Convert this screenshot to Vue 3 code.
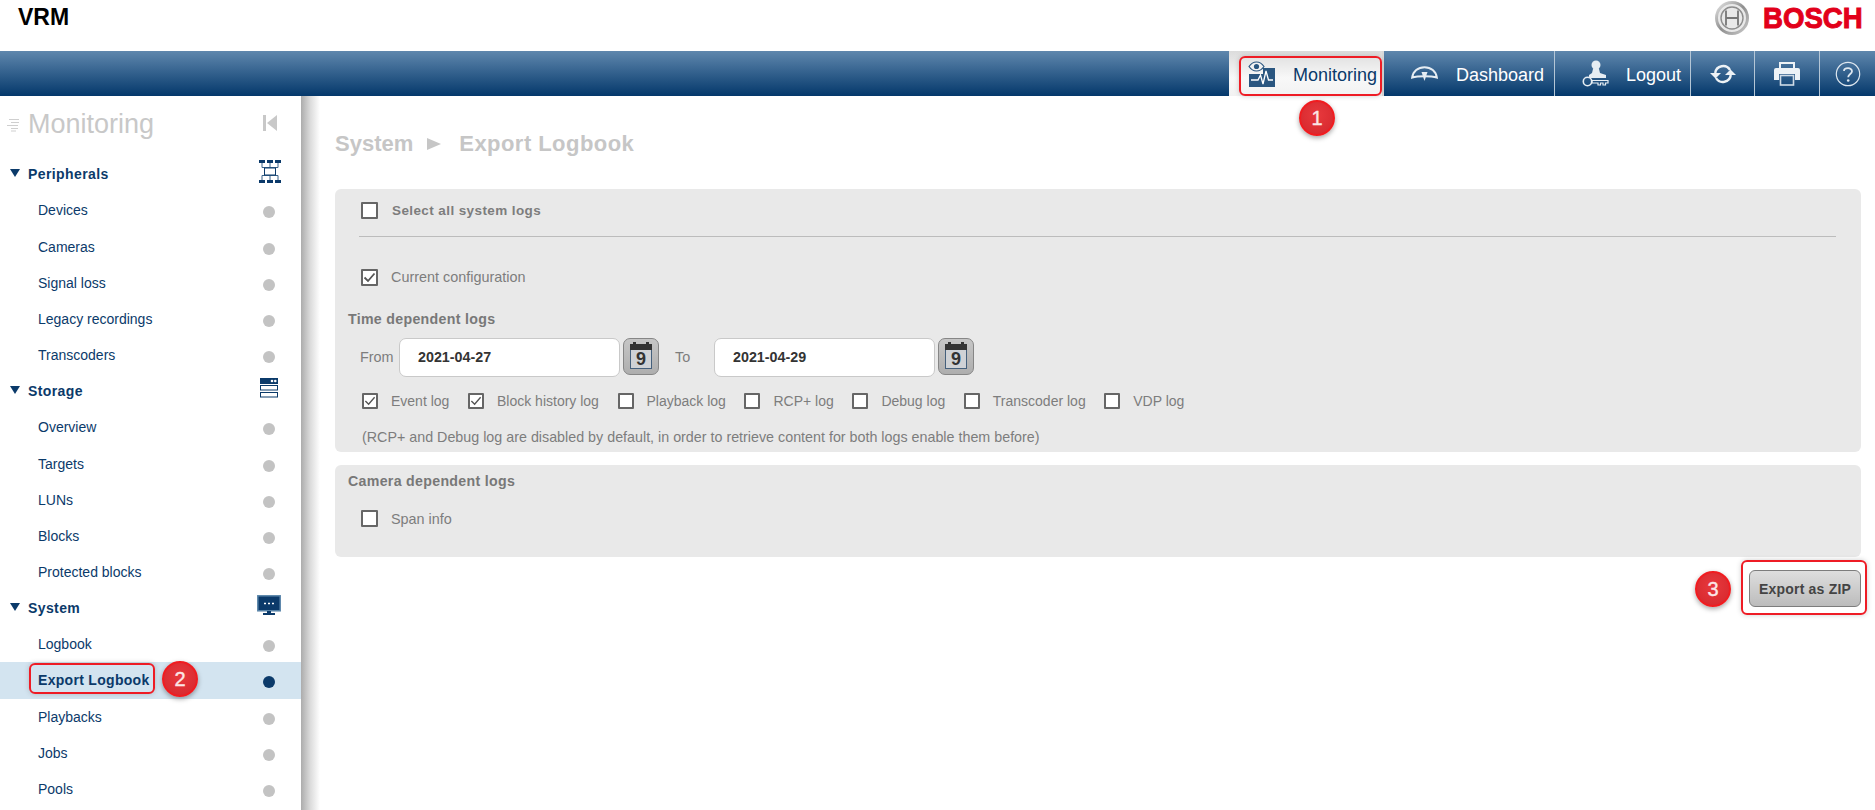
<template>
  <div class="page">
    <header class="top">
      <div class="app-name">VRM</div>
      <div class="brand">
        <svg class="emblem" width="34" height="34" viewBox="0 0 34 34">
          <defs>
            <linearGradient id="ring" x1="0" y1="0" x2="1" y2="1">
              <stop offset="0" stop-color="#e4e4e4" />
              <stop offset="0.5" stop-color="#8f8f8f" />
              <stop offset="1" stop-color="#c9c9c9" />
            </linearGradient>
          </defs>
          <circle cx="17" cy="17" r="15.5" fill="#e9e9e9" stroke="url(#ring)" stroke-width="3" />
          <circle cx="17" cy="17" r="11" fill="none" stroke="#8d8d8d" stroke-width="1.4" />
          <path d="M11 9.5V24.5M23 9.5V24.5M11 17H23" fill="none" stroke="#777" stroke-width="1.8" />
        </svg>
        <span class="bosch">BOSCH</span>
      </div>
    </header>

    <nav class="nav">
      <div class="nav-tab active">
        <svg width="28" height="28" viewBox="0 0 28 28">
          <rect x="1" y="14" width="26" height="13" fill="#2a5680" />
          <rect x="15" y="8" width="12" height="7" fill="#2a5680" />
          <path d="M1 6.5C5 0.5 12 0.5 16 6.5C12 12.5 5 12.5 1 6.5Z" fill="#f2f2f2" stroke="#2a5680" stroke-width="1.2" />
          <circle cx="8.5" cy="6.5" r="2.6" fill="#2a5680" />
          <path d="M3 20H10L12.5 15L15 24L18 11L20.5 20H25" fill="none" stroke="#fff" stroke-width="1.3" />
        </svg>
        <span class="nav-text">Monitoring</span>
        <i class="mark mark-tab"></i>
        <b class="badge badge-tab">1</b>
      </div>
      <div class="nav-tab dash">
        <svg width="27" height="15" viewBox="0 0 27 15">
          <path d="M1.2 11.500C2 5.500 7 1.200 13.500 1.200C20 1.200 25 5.500 25.800 11.500C20 9.800 7 9.800 1.200 11.500Z" fill="none" stroke="#e6edf3" stroke-width="2" />
          <path d="M10.500 6L13.500 15L16.500 6Z" fill="#e6edf3" />
        </svg>
        <span class="nav-text">Dashboard</span>
      </div>
      <div class="nav-tab logout">
        <svg width="27" height="28" viewBox="0 0 27 28">
          <circle cx="14" cy="5" r="4.5" fill="#e6edf3" />
          <path d="M11 9H17L18 13L24 15V18H7V15L10 13Z" fill="#e6edf3" />
          <circle cx="5.5" cy="21.5" r="4.2" fill="none" stroke="#e6edf3" stroke-width="1.6" />
          <path d="M10 20.5H26V23H23.5V25H21V23H18.5V25H16V23H10Z" fill="none" stroke="#e6edf3" stroke-width="1.2" />
        </svg>
        <span class="nav-text">Logout</span>
      </div>
      <div class="nav-tab tool refresh">
        <svg width="26" height="22" viewBox="0 0 26 22">
          <path d="M5.2 10A8 8 0 0 1 20 7" fill="none" stroke="#edf2f6" stroke-width="2.4" />
          <path d="M20.800 12A8 8 0 0 1 6 15" fill="none" stroke="#edf2f6" stroke-width="2.4" />
          <path d="M0 10H11L5.5 15.5Z" fill="#edf2f6" />
          <path d="M15 12H26L20.5 6.5Z" fill="#edf2f6" />
        </svg>
      </div>
      <div class="nav-tab tool print">
        <svg width="26" height="24" viewBox="0 0 26 24">
          <path d="M6 7V1H20V7" fill="none" stroke="#edf2f6" stroke-width="2" />
          <path d="M2 6H24Q26 6 26 8V18H21V12H5V18H0V8Q0 6 2 6Z" fill="#edf2f6" />
          <rect x="6.5" y="13.5" width="13" height="9.5" fill="none" stroke="#cfdbe6" stroke-width="1.6" />
        </svg>
      </div>
      <div class="nav-tab tool help">
        <svg width="26" height="26" viewBox="0 0 26 26">
          <circle cx="13" cy="13" r="11.7" fill="none" stroke="#dfe8f0" stroke-width="1.2" />
          <path d="M9 10C9 6.5 17 6 17 10.3C17 13 13.2 13 13.2 16.3" fill="none" stroke="#dfe8f0" stroke-width="1.8" />
          <circle cx="13.2" cy="19.5" r="1.3" fill="#dfe8f0" />
        </svg>
      </div>
    </nav>

    <div class="body">
      <aside class="side">
        <div class="side-title">
          <svg width="14" height="14" viewBox="0 0 14 14">
            <path d="M3 1.500H13M5 4.500H13M1 7.500H12M5 10.500H12M5 13H10" stroke="#cfcfcf" stroke-width="1.2" />
          </svg>
          <span class="side-name">Monitoring</span>
          <svg class="collapse" width="14" height="16" viewBox="0 0 14 16">
            <rect x="0" y="0" width="3" height="16" fill="#c8c8c8" />
            <path d="M14 0V16L4 8Z" fill="#c8c8c8" />
          </svg>
        </div>

        <template v-for="g in groups" :key="g.name">
          <div class="row group">
            <i class="tri"></i>
            <span class="group-name">{{ g.name }}</span>
            <svg v-if="g.icon === 'net'" class="g-icon" width="22" height="23" viewBox="0 0 22 23">
              <path d="M0 0H6V3H0ZM8 0H14V3H8ZM16 0H22V3H16ZM0 20H6V23H0ZM8 20H14V23H8ZM16 20H22V23H16Z" fill="#0b3a6a" />
              <path d="M3 3V7.500H19V3M11 3V7.500M3 20V15.500H19V20M11 15.500V20" fill="none" stroke="#3a6288" stroke-width="1" />
              <rect x="5.500" y="8" width="11" height="7" fill="#fff" stroke="#0b3a6a" stroke-width="1" />
            </svg>
            <svg v-else-if="g.icon === 'store'" class="g-icon store" width="20" height="20" viewBox="0 0 20 20">
              <rect x="1" y="0" width="18" height="6" fill="#0b3a6a" />
              <circle cx="13" cy="3" r="1.300" fill="#fff" />
              <circle cx="16.300" cy="3" r="1.300" fill="#fff" />
              <rect x="1.500" y="7.500" width="17" height="4.500" fill="#fff" stroke="#0b3a6a" />
              <rect x="1.500" y="14.500" width="17" height="4.500" fill="#fff" stroke="#0b3a6a" />
            </svg>
            <svg v-else class="g-icon" width="24" height="21" viewBox="0 0 24 21">
              <rect x="0.800" y="0.800" width="22.400" height="15" fill="#0b3a6a" stroke="#5b86aa" stroke-width="1.500" />
              <path d="M7 8.500H9M11 8.500H13M15 8.500H17" stroke="#fff" stroke-width="1.700" />
              <path d="M10 16H14V18H18V20H6V18H10Z" fill="#0b3a6a" />
            </svg>
          </div>
          <div v-for="item in g.items" :key="item" class="row item" :class="{ current: item === 'Export Logbook' }">
            <span>{{ item }}</span>
            <i class="dot"></i>
            <template v-if="item === 'Export Logbook'">
              <i class="mark mark-row"></i>
              <b class="badge badge-row">2</b>
            </template>
          </div>
        </template>
      </aside>
      <div class="side-shadow"></div>

      <main class="main">
        <h1 class="crumb">
          <span class="crumb-sys">System</span>
          <i class="crumb-arrow"></i>
          <span class="crumb-page">Export Logbook</span>
        </h1>

        <section class="panel first">
          <label class="line select-all">
            <span class="box"></span>
            <span class="strong">Select all system logs</span>
          </label>
          <div class="rule"></div>
          <label class="line current-config">
            <span class="box">
              <svg width="13" height="13" viewBox="0 0 13 13"><path d="M1.500 6.500L5 10L11.500 2.500" fill="none" stroke="#555" stroke-width="1.800" /></svg>
            </span>
            <span>Current configuration</span>
          </label>
          <div class="heading time-head">Time dependent logs</div>
          <div class="dates">
            <span class="from">From</span>
            <div class="date">2021-04-27</div>
            <button class="cal">
              <span class="cal-top"></span>
              <span class="cal-day">9</span>
            </button>
            <span class="to">To</span>
            <div class="date">2021-04-29</div>
            <button class="cal">
              <span class="cal-top"></span>
              <span class="cal-day">9</span>
            </button>
          </div>
          <div class="logs">
            <label v-for="l in logs" :key="l.name" class="log">
              <span class="box small">
                <svg v-if="l.on" width="12" height="12" viewBox="0 0 13 13"><path d="M1.500 6.500L5 10L11.500 2.500" fill="none" stroke="#555" stroke-width="1.500" /></svg>
              </span>
              <span>{{ l.name }}</span>
            </label>
          </div>
          <p class="note">(RCP+ and Debug log are disabled by default, in order to retrieve content for both logs enable them before)</p>
        </section>

        <section class="panel second">
          <div class="heading camera-head">Camera dependent logs</div>
          <label class="line span-info">
            <span class="box"></span>
            <span>Span info</span>
          </label>
        </section>

        <div class="actions">
          <div class="export-wrap">
            <button class="export">Export as ZIP</button>
            <i class="mark mark-export"></i>
            <b class="badge badge-export">3</b>
          </div>
        </div>
      </main>
    </div>
  </div>
</template>

<script setup>
const groups = [
  { name: 'Peripherals', icon: 'net', items: ['Devices', 'Cameras', 'Signal loss', 'Legacy recordings', 'Transcoders'] },
  { name: 'Storage', icon: 'store', items: ['Overview', 'Targets', 'LUNs', 'Blocks', 'Protected blocks'] },
  { name: 'System', icon: 'screen', items: ['Logbook', 'Export Logbook', 'Playbacks', 'Jobs', 'Pools'] }
]

const logs = [
  { name: 'Event log', on: true },
  { name: 'Block history log', on: true },
  { name: 'Playback log', on: false },
  { name: 'RCP+ log', on: false },
  { name: 'Debug log', on: false },
  { name: 'Transcoder log', on: false },
  { name: 'VDP log', on: false }
]
</script>

<style>
html,
body {
  margin: 0;
  overflow: hidden;
  background: #fff;
}
</style>

<style scoped>
.page {
  width: 1875px;
  height: 810px;
  overflow: hidden;
  font-family: 'Liberation Sans', Arial, sans-serif;
  background: #fff;
}

.top {
  height: 51px;
  display: flex;
  justify-content: space-between;
  align-items: flex-start;
}

.app-name {
  margin: 4px 0 0 18px;
  font-size: 23px;
  line-height: 26px;
  font-weight: 700;
  color: #000;
}

.brand {
  display: flex;
  align-items: center;
  margin: 1px 16px 0 0;
}

.bosch {
  width: 96px;
  margin-left: 14px;
  font-size: 30px;
  line-height: 34px;
  font-weight: 700;
  color: #e2001a;
  -webkit-text-stroke: 1px #e2001a;
  transform: scaleX(0.92);
  transform-origin: left center;
}

.nav {
  height: 45px;
  display: flex;
  justify-content: flex-end;
  background: linear-gradient(#5f87ad, #04386b);
}

.nav-tab {
  position: relative;
  display: flex;
  align-items: center;
  box-sizing: border-box;
  height: 45px;
  color: #fff;
  font-size: 18px;
  border-left: 1px solid #b4c6d6;
}

.nav-text {
  margin-top: 3px;
}

.nav-tab.active {
  width: 155px;
  padding-left: 19px;
  gap: 17px;
  color: #0b3a6a;
  border-left: 0;
  border-right: 2px solid #d9d9d9;
  background: linear-gradient(#dcdcdc, #f8f8f8 60%, #f2f2f2);
}

.nav-tab.dash {
  width: 170px;
  padding-left: 27px;
  gap: 18px;
  border-left: 0;
}

.nav-tab.logout {
  width: 136px;
  padding-left: 27px;
  gap: 17px;
}

.nav-tab.tool {
  justify-content: center;
}

.refresh {
  width: 64px;
}

.print {
  width: 65px;
}

.help {
  width: 56px;
}

.body {
  display: flex;
  height: 714px;
}

.side {
  width: 301px;
  flex: none;
  color: #0b3a6a;
}

.side-shadow {
  width: 19px;
  flex: none;
  background: linear-gradient(90deg, #acacac, #dcdcdc 50%, #fff);
}

.side-title {
  position: relative;
  height: 60.2px;
  box-sizing: border-box;
  padding: 0 24px 3px 6px;
  display: flex;
  align-items: center;
}

.side-name {
  margin-left: 8px;
  font-size: 27px;
  color: #c8c8c8;
}

.collapse {
  margin-left: auto;
  margin-bottom: 3px;
}

.row {
  position: relative;
  height: 36.17px;
  display: flex;
  align-items: center;
  box-sizing: border-box;
}

.group {
  padding: 0 20px 0 10px;
}

.tri {
  width: 0;
  height: 0;
  margin-bottom: 3px;
  border-left: 5px solid transparent;
  border-right: 5px solid transparent;
  border-top: 8px solid #0b3a6a;
}

.group-name {
  margin-left: 8px;
  font-size: 14px;
  font-weight: 700;
  letter-spacing: 0.4px;
}

.g-icon {
  margin-left: auto;
  margin-bottom: 6px;
}

.g-icon.store {
  margin-right: 2px;
}

.item {
  padding: 0 26px 0 38px;
  font-size: 14px;
}

.dot {
  width: 12px;
  height: 12px;
  margin: 4px 0 0 auto;
  border-radius: 50%;
  background: #c3c3c3;
}

.current {
  background: #d3e4f0;
  font-weight: 700;
  letter-spacing: 0.3px;
}

.current .dot {
  background: #0b3a6a;
}

.main {
  flex: 1;
  padding: 0 14px 0 15px;
  min-width: 0;
}

.crumb {
  display: flex;
  align-items: center;
  height: 93px;
  box-sizing: border-box;
  padding-top: 3px;
  margin: 0;
  font-size: 22px;
  font-weight: 700;
  color: #c6c6c6;
}

.crumb-arrow {
  width: 0;
  height: 0;
  margin: 0 18px 0 14px;
  border-top: 6px solid transparent;
  border-bottom: 6px solid transparent;
  border-left: 14px solid #c6c6c6;
}

.crumb-page {
  letter-spacing: 0.45px;
}

.panel {
  background: #e9e9e9;
  border-radius: 6px;
  font-size: 14.4px;
  color: #7d7d7d;
}

.panel.first {
  height: 263px;
  overflow: hidden;
}

.panel.second {
  height: 92px;
  margin-top: 13px;
  overflow: hidden;
}

.line {
  display: flex;
  align-items: center;
  height: 26px;
  padding-left: 26px;
  gap: 13px;
}

.select-all {
  height: 43px;
  gap: 14px;
}

.strong {
  font-weight: 700;
  font-size: 13.5px;
  letter-spacing: 0.4px;
}

.box {
  width: 17px;
  height: 17px;
  box-sizing: border-box;
  flex: none;
  display: flex;
  align-items: center;
  justify-content: center;
  background: #fff;
  border: 2px solid #666;
  border-radius: 1px;
}

.box.small {
  width: 16px;
  height: 16px;
}

.rule {
  height: 1px;
  margin: 4px 25px 0 24px;
  background: #bcbcbc;
}

.current-config {
  margin-top: 27px;
}

.heading {
  font-weight: 700;
  font-size: 14.2px;
  line-height: 20px;
  color: #787878;
  letter-spacing: 0.3px;
}

.time-head {
  margin: 19px 0 0 13px;
}

.dates {
  display: flex;
  align-items: flex-start;
  height: 39px;
  margin-top: 9px;
  padding-left: 25px;
}

.from,
.to {
  line-height: 38px;
}

.from {
  width: 39px;
}

.to {
  width: 39px;
  margin-left: 16px;
}

.date {
  width: 221px;
  height: 39px;
  box-sizing: border-box;
  padding-left: 18px;
  font-size: 14.3px;
  font-weight: 700;
  line-height: 37px;
  color: #333;
  background: #fff;
  border: 1px solid #c9c9c9;
  border-radius: 7px;
}

.cal {
  position: relative;
  width: 36px;
  height: 37px;
  margin-left: 3px;
  padding: 0;
  box-sizing: border-box;
  background: linear-gradient(#c6c6c6, #aeaeae);
  border: 1px solid #868686;
  border-radius: 7px;
}

.cal-top {
  position: absolute;
  left: 6px;
  top: 5px;
  width: 22px;
  height: 6px;
  background: #333;
}

.cal-top::before,
.cal-top::after {
  content: '';
  position: absolute;
  top: -2px;
  width: 3px;
  height: 2px;
  background: #333;
}

.cal-top::before {
  left: 3px;
}

.cal-top::after {
  right: 3px;
}

.cal-day {
  position: absolute;
  left: 6px;
  top: 11px;
  width: 22px;
  height: 19px;
  box-sizing: border-box;
  background: #cfd2d6;
  border: 1px solid #45607c;
  border-top: 0;
  font-family: 'Liberation Sans', Arial, sans-serif;
  font-size: 18px;
  font-weight: 700;
  line-height: 18px;
  color: #333;
  text-align: center;
}

.logs {
  display: flex;
  align-items: center;
  height: 20px;
  margin-top: 14px;
  padding-left: 27px;
  gap: 18.6px;
  font-size: 14px;
}

.log {
  display: flex;
  align-items: center;
  gap: 13px;
}

.note {
  height: 20px;
  margin: 16px 0 0 27px;
  line-height: 20px;
  font-size: 14.3px;
}

.camera-head {
  margin: 6px 0 0 13px;
}

.span-info {
  margin-top: 14.5px;
}

.actions {
  display: flex;
  justify-content: flex-end;
  margin-top: 13px;
}

.export-wrap {
  position: relative;
  width: 112px;
  height: 37px;
}

.export {
  width: 112px;
  height: 37px;
  padding: 0;
  box-sizing: border-box;
  font-family: 'Liberation Sans', Arial, sans-serif;
  font-size: 14px;
  font-weight: 700;
  letter-spacing: 0.2px;
  color: #444;
  background: linear-gradient(#dedede, #bcbcbc);
  border: 1px solid #7d7d7d;
  border-radius: 6px;
}

.mark {
  position: absolute;
  box-sizing: border-box;
  border: 2px solid #ee1c25;
  border-radius: 6px;
  box-shadow: 0 0 5px rgba(60, 60, 60, 0.25);
  pointer-events: none;
}

.mark-tab {
  left: 10px;
  top: 5px;
  width: 143px;
  height: 40px;
}

.mark-row {
  left: 29px;
  top: 1px;
  width: 126px;
  height: 31px;
}

.mark-export {
  left: -8px;
  top: -10px;
  width: 126px;
  height: 55px;
}

.badge {
  position: absolute;
  width: 36px;
  height: 36px;
  box-sizing: border-box;
  border: 2px solid #f01c20;
  border-radius: 50%;
  background: radial-gradient(circle at 50% 40%, #e8393d, #d4262c);
  box-shadow: 0 2px 5px rgba(0, 0, 0, 0.35);
  color: #fbe6e6;
  font-size: 20px;
  font-weight: 400;
  -webkit-text-stroke: 0.4px #fbe6e6;
  letter-spacing: 0;
  line-height: 32px;
  text-align: center;
}

.badge-tab {
  left: 70px;
  top: 49px;
}

.badge-row {
  left: 162px;
  top: -1px;
}

.badge-export {
  left: -54px;
  top: 1px;
}
</style>
